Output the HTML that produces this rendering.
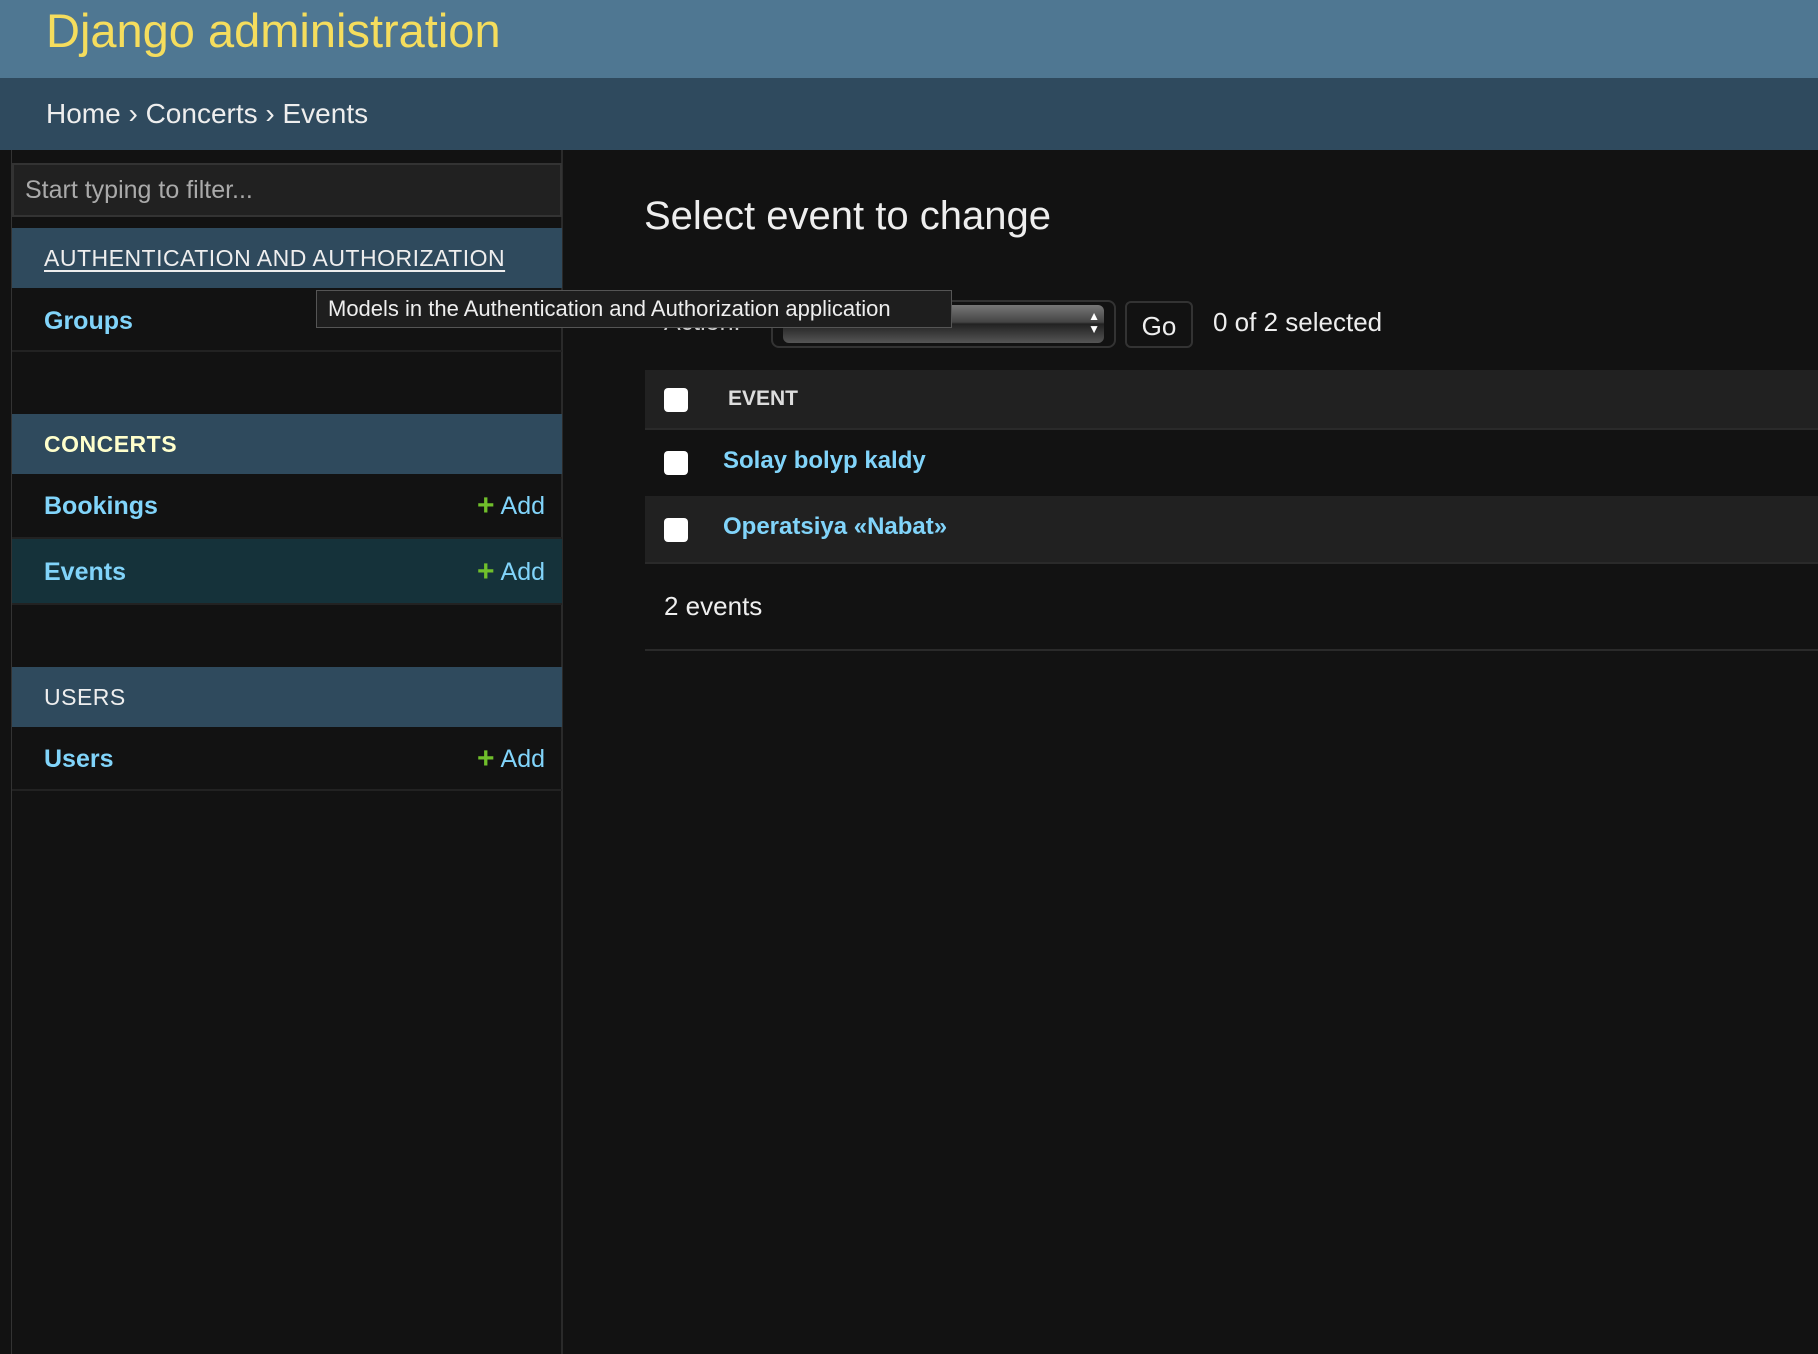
<!DOCTYPE html>
<html><head><meta charset="utf-8"><style>
*{box-sizing:border-box;margin:0;padding:0}
body{width:1818px;height:1354px;background:#121212;font-family:"Liberation Sans",sans-serif;color:#eee;position:relative;overflow:hidden}
.abs{position:absolute}
#hdr{left:0;top:0;width:1818px;height:78px;background:#4f7792}
#hdr span{position:absolute;left:46px;top:3px;font-size:47px;color:#f5dd5d;font-weight:300}
#bc{left:0;top:78px;width:1818px;height:72px;background:#2f4a5e;font-size:28px;color:#eee;padding:20px 0 0 46px}
#side{left:11px;top:150px;width:552px;height:1204px;border-left:1px solid #333;border-right:2px solid #2a2a2a}
#filter{left:12px;top:163px;width:550px;height:54px;background:#212121;border:2px solid #333;font-size:25px;color:#aaa;padding:11px 0 0 11px}
.cap{left:12px;width:550px;height:60px;background:#2f4a5d;font-size:23px;padding:17px 0 0 32px;letter-spacing:.5px}
.row{left:12px;width:550px;border-bottom:2px solid #222;font-size:25px;font-weight:bold;color:#81d4fa;padding-left:32px;line-height:30px}
.add{position:absolute;right:17px;top:18px;font-weight:normal;color:#81d4fa;line-height:30px}
.add b{color:#70bf2b;font-size:30px;margin-right:6px;line-height:30px;vertical-align:top}
.cb{position:absolute;width:24px;height:24px;background:#fff;border-radius:4px}
</style></head><body>
<div id="hdr" class="abs"><span>Django administration</span></div>
<div id="bc" class="abs">Home › Concerts › Events</div>
<div id="side" class="abs"></div>
<div id="filter" class="abs">Start typing to filter...</div>
<div class="abs cap" style="top:228px;height:60px;text-decoration:underline;text-underline-offset:4px">AUTHENTICATION AND AUTHORIZATION</div>
<div class="abs row" style="top:288px;height:64px;padding-top:18px">Groups</div>
<div class="abs cap" style="top:414px;color:#ffffcc;font-weight:bold">CONCERTS</div>
<div class="abs row" style="top:473px;height:66px;padding-top:18px">Bookings<span class="add"><b>+</b>Add</span></div>
<div class="abs row" style="top:539px;height:66px;padding-top:18px;background:#15323a">Events<span class="add"><b>+</b>Add</span></div>
<div class="abs cap" style="top:667px">USERS</div>
<div class="abs row" style="top:726px;height:65px;padding-top:18px">Users<span class="add"><b>+</b>Add</span></div>

<div class="abs" style="left:644px;top:194px;font-size:40px;font-weight:300;color:#eee">Select event to change</div>
<div class="abs" style="left:664px;top:308px;font-size:25px;color:#ccc">Action:</div>
<div class="abs" style="left:771px;top:300px;width:345px;height:48px;border:2px solid #333;border-radius:8px;background:#121212;padding:3px 10px 3px 10px">
<div style="height:38px;border-radius:6px;background:linear-gradient(#777,#444 45%,#222 50%,#555)"></div>
<div style="position:absolute;right:14px;top:8px;color:#fff;font-size:12px;line-height:13px">▲<br>▼</div></div>
<div class="abs" style="left:1125px;top:301px;width:68px;height:47px;border:2px solid #333;border-radius:6px;font-size:26px;text-align:center;padding-top:8px">Go</div>
<div class="abs" style="left:1213px;top:307px;font-size:26px">0 of 2 selected</div>
<div class="abs" style="left:645px;top:370px;width:1173px;height:60px;background:#212121;border-bottom:2px solid #2a2a2a"></div>
<div class="cb" style="left:664px;top:388px"></div>
<div class="abs" style="left:728px;top:387px;font-size:21px;font-weight:bold;color:#ddd">EVENT</div>
<div class="cb" style="left:664px;top:451px"></div>
<div class="abs" style="left:723px;top:447px;font-size:24px;font-weight:bold;color:#81d4fa">Solay bolyp kaldy</div>
<div class="abs" style="left:645px;top:496px;width:1173px;height:68px;background:#212121;border-bottom:2px solid #2a2a2a"></div>
<div class="cb" style="left:664px;top:518px"></div>
<div class="abs" style="left:723px;top:513px;font-size:24px;font-weight:bold;color:#81d4fa">Operatsiya «Nabat»</div>
<div class="abs" style="left:664px;top:591px;font-size:26px">2 events</div>
<div class="abs" style="left:645px;top:649px;width:1173px;height:2px;background:#2a2a2a"></div>
<div class="abs" style="left:316px;top:290px;width:636px;height:38px;background:#1e1e1e;border:1px solid #555;font-size:22px;color:#eee;padding:5px 0 0 11px;white-space:nowrap">Models in the Authentication and Authorization application</div>
</body></html>
